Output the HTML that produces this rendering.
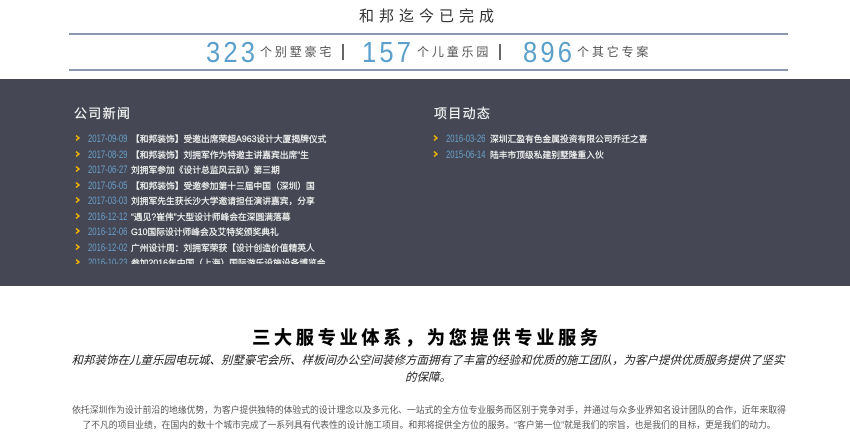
<!DOCTYPE html>
<html lang="zh">
<head>
<meta charset="utf-8">
<style>
html,body{margin:0;padding:0;width:850px;height:436px;overflow:hidden;background:#fff;}
body{font-family:"Liberation Sans","Noto Sans CJK SC",sans-serif;}
.w{position:absolute;left:0;top:0;width:850px;height:436px;overflow:hidden;filter:blur(.3px);}
.a{position:absolute;white-space:nowrap;}
.line{position:absolute;left:69px;width:719px;height:2px;background:#8a98b0;}
.num{position:absolute;top:37px;font-size:29px;line-height:32px;color:#5b9fcb;letter-spacing:3.6px;transform:scaleX(.88);transform-origin:left center;}
.lab{position:absolute;top:44px;font-size:12px;line-height:16px;color:#555;letter-spacing:2.85px;}
.sep{position:absolute;top:44px;width:1.5px;height:16px;background:#666;}
.band{position:absolute;left:0;top:79px;width:850px;height:207px;background:#454854;}
.h{position:absolute;top:105px;font-size:13px;line-height:18px;color:#f2f2f2;letter-spacing:1.3px;-webkit-text-stroke:.2px #f2f2f2;}
.clip{position:absolute;top:132px;height:132px;overflow:hidden;}
.row{position:relative;height:15.5px;line-height:15.5px;font-size:8.75px;white-space:nowrap;}
.row svg{position:absolute;left:0;top:3px;}
.d{position:absolute;left:13px;color:#6a9fca;font-size:11px;transform:scaleX(.7);transform-origin:left center;}
.t{position:absolute;left:56px;color:#f4f4f4;-webkit-text-stroke:.2px #f4f4f4;}
.c{position:absolute;left:0;width:850px;text-align:center;white-space:nowrap;}
</style>
</head>
<body>
<div class="w">
<div class="a" style="left:359px;top:7px;font-size:15px;line-height:20px;color:#333;letter-spacing:5px;">和邦迄今已完成</div>
<div class="line" style="top:33px;"></div>
<div class="line" style="top:69px;"></div>

<div class="num" style="left:206px;">323</div>
<div class="lab" style="left:260px;">个别墅豪宅</div>
<div class="sep" style="left:342px;"></div>
<div class="num" style="left:362px;">157</div>
<div class="lab" style="left:417px;">个儿童乐园</div>
<div class="sep" style="left:499px;"></div>
<div class="num" style="left:523px;">896</div>
<div class="lab" style="left:577px;">个其它专案</div>

<div class="band"></div>
<div class="h" style="left:74px;">公司新闻</div>
<div class="h" style="left:434px;">项目动态</div>

<div class="clip" style="left:75px;width:290px;">
<div class="row"><svg width="5" height="6" viewBox="0 0 5 6"><path d="M1 .5L4 3L1 5.5" fill="none" stroke="#f5b400" stroke-width="1.5"/></svg><span class="d">2017-09-09</span><span class="t">【和邦装饰】受邀出席荣超A963设计大厦揭牌仪式</span></div>
<div class="row"><svg width="5" height="6" viewBox="0 0 5 6"><path d="M1 .5L4 3L1 5.5" fill="none" stroke="#f5b400" stroke-width="1.5"/></svg><span class="d">2017-08-29</span><span class="t">【和邦装饰】刘拥军作为特邀主讲嘉宾出席“生</span></div>
<div class="row"><svg width="5" height="6" viewBox="0 0 5 6"><path d="M1 .5L4 3L1 5.5" fill="none" stroke="#f5b400" stroke-width="1.5"/></svg><span class="d">2017-06-27</span><span class="t">刘拥军参加《设计总监风云趴》第三期</span></div>
<div class="row"><svg width="5" height="6" viewBox="0 0 5 6"><path d="M1 .5L4 3L1 5.5" fill="none" stroke="#f5b400" stroke-width="1.5"/></svg><span class="d">2017-05-05</span><span class="t">【和邦装饰】受邀参加第十三届中国（深圳）国</span></div>
<div class="row"><svg width="5" height="6" viewBox="0 0 5 6"><path d="M1 .5L4 3L1 5.5" fill="none" stroke="#f5b400" stroke-width="1.5"/></svg><span class="d">2017-03-03</span><span class="t">刘拥军先生获长沙大学邀请担任演讲嘉宾，分享</span></div>
<div class="row"><svg width="5" height="6" viewBox="0 0 5 6"><path d="M1 .5L4 3L1 5.5" fill="none" stroke="#f5b400" stroke-width="1.5"/></svg><span class="d">2016-12-12</span><span class="t">“遇见?崔伟”大型设计师峰会在深圆满落幕</span></div>
<div class="row"><svg width="5" height="6" viewBox="0 0 5 6"><path d="M1 .5L4 3L1 5.5" fill="none" stroke="#f5b400" stroke-width="1.5"/></svg><span class="d">2016-12-06</span><span class="t">G10国际设计师峰会及艾特奖颁奖典礼</span></div>
<div class="row"><svg width="5" height="6" viewBox="0 0 5 6"><path d="M1 .5L4 3L1 5.5" fill="none" stroke="#f5b400" stroke-width="1.5"/></svg><span class="d">2016-12-02</span><span class="t">广州设计周：刘拥军荣获【设计创造价值精英人</span></div>
<div class="row"><svg width="5" height="6" viewBox="0 0 5 6"><path d="M1 .5L4 3L1 5.5" fill="none" stroke="#f5b400" stroke-width="1.5"/></svg><span class="d">2016-10-23</span><span class="t">参加2016年中国（上海）国际游乐设施设备博览会</span></div>
</div>

<div class="clip" style="left:433px;width:290px;">
<div class="row"><svg width="5" height="6" viewBox="0 0 5 6"><path d="M1 .5L4 3L1 5.5" fill="none" stroke="#f5b400" stroke-width="1.5"/></svg><span class="d">2016-03-26</span><span class="t" style="left:57px;">深圳汇盈有色金属投资有限公司乔迁之喜</span></div>
<div class="row"><svg width="5" height="6" viewBox="0 0 5 6"><path d="M1 .5L4 3L1 5.5" fill="none" stroke="#f5b400" stroke-width="1.5"/></svg><span class="d">2015-06-14</span><span class="t" style="left:57px;">陆丰市顶级私建别墅隆重入伙</span></div>
</div>

<div class="c" style="top:326px;left:2px;font-size:18px;line-height:24px;font-weight:bold;color:#000;letter-spacing:3.85px;-webkit-text-stroke:.3px #000;">三大服专业体系，为您提供专业服务</div>
<div class="c" style="top:352px;left:3px;font-size:11.5px;line-height:18px;font-style:italic;color:#222;">和邦装饰在儿童乐园电玩城、别墅豪宅会所、样板间办公空间装修方面拥有了丰富的经验和优质的施工团队，为客户提供优质服务提供了坚实</div>
<div class="c" style="top:369px;left:3px;font-size:11.5px;line-height:18px;font-style:italic;color:#222;">的保障。</div>
<div class="c" style="top:402px;left:4px;font-size:8.82px;line-height:16px;color:#555;">依托深圳作为设计前沿的地缘优势，为客户提供独特的体验式的设计理念以及多元化、一站式的全方位专业服务而区别于竞争对手，并通过与众多业界知名设计团队的合作，近年来取得</div>
<div class="c" style="top:417px;left:4px;font-size:8.82px;line-height:16px;color:#555;">了不凡的项目业绩，在国内的数十个城市完成了一系列具有代表性的设计施工项目。和邦将提供全方位的服务。“客户第一位”就是我们的宗旨，也是我们的目标，更是我们的动力。</div>
</div>
</body>
</html>
